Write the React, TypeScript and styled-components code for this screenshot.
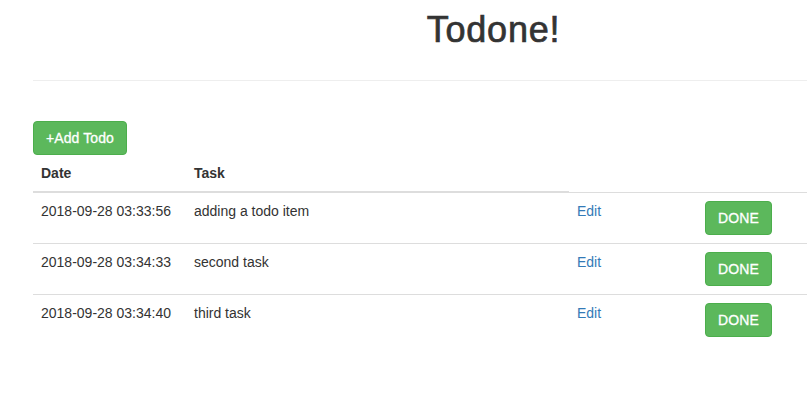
import React from "react";
import styled, { createGlobalStyle } from "styled-components";

const GlobalStyle = createGlobalStyle`
  html, body {
    margin: 0;
    padding: 0;
    overflow: hidden;
    background: #fff;
  }
  body {
    font-family: "Liberation Sans", Arial, Helvetica, sans-serif;
    font-size: 14px;
    line-height: 20px;
    color: #333;
  }
  * { box-sizing: border-box; }
`;

const Page = styled.div`
  width: 921px;
  margin-left: 33px;
`;

const Header = styled.header`
  padding: 10px 0 30px;
  border-bottom: 1px solid #eee;
`;

const Title = styled.h1`
  margin: 0;
  font-size: 36px;
  line-height: 40px;
  font-weight: 500;
  letter-spacing: 0.8px;
  -webkit-text-stroke: 0.7px #333;
  text-align: center;
  color: #333;
`;

const Toolbar = styled.div`
  display: flex;
  margin-top: 40px;
`;

const Button = styled.button`
  display: inline-block;
  height: 34px;
  padding: 6px 12px;
  font-family: inherit;
  font-size: 14px;
  line-height: 20px;
  letter-spacing: 0.1px;
  -webkit-text-stroke: 0.3px #fff;
  color: #fff;
  background: #5cb85c;
  border: 1px solid #4cae4c;
  border-radius: 4px;
  cursor: pointer;
  white-space: nowrap;
`;

const Table = styled.table`
  width: 921px;
  border-collapse: collapse;
  border-spacing: 0;
  table-layout: fixed;
`;

const Th = styled.th`
  text-align: left;
  font-weight: bold;
  padding: 8px;
  line-height: 20px;
  vertical-align: bottom;
  border-bottom: 2px solid #ddd;
`;

const Td = styled.td`
  padding: 8px;
  line-height: 20px;
  vertical-align: top;
  border-top: 1px solid #ddd;
`;

const EditLink = styled.a`
  color: #337ab7;
  text-decoration: none;
`;

const todos = [
  { date: "2018-09-28 03:33:56", task: "adding a todo item" },
  { date: "2018-09-28 03:34:33", task: "second task" },
  { date: "2018-09-28 03:34:40", task: "third task" },
];

export default function App() {
  return (
    <>
      <GlobalStyle />
      <Page>
        <Header>
          <Title>Todone!</Title>
        </Header>
        <Toolbar>
          <Button>+Add Todo</Button>
        </Toolbar>
        <Table>
          <colgroup>
            <col style={{ width: 153 }} />
            <col style={{ width: 383 }} />
            <col style={{ width: 128 }} />
            <col />
          </colgroup>
          <thead>
            <tr>
              <Th>Date</Th>
              <Th>Task</Th>
            </tr>
          </thead>
          <tbody>
            {todos.map((t) => (
              <tr key={t.date}>
                <Td>{t.date}</Td>
                <Td>{t.task}</Td>
                <Td>
                  <EditLink href="#">Edit</EditLink>
                </Td>
                <Td>
                  <Button>DONE</Button>
                </Td>
              </tr>
            ))}
          </tbody>
        </Table>
      </Page>
    </>
  );
}
